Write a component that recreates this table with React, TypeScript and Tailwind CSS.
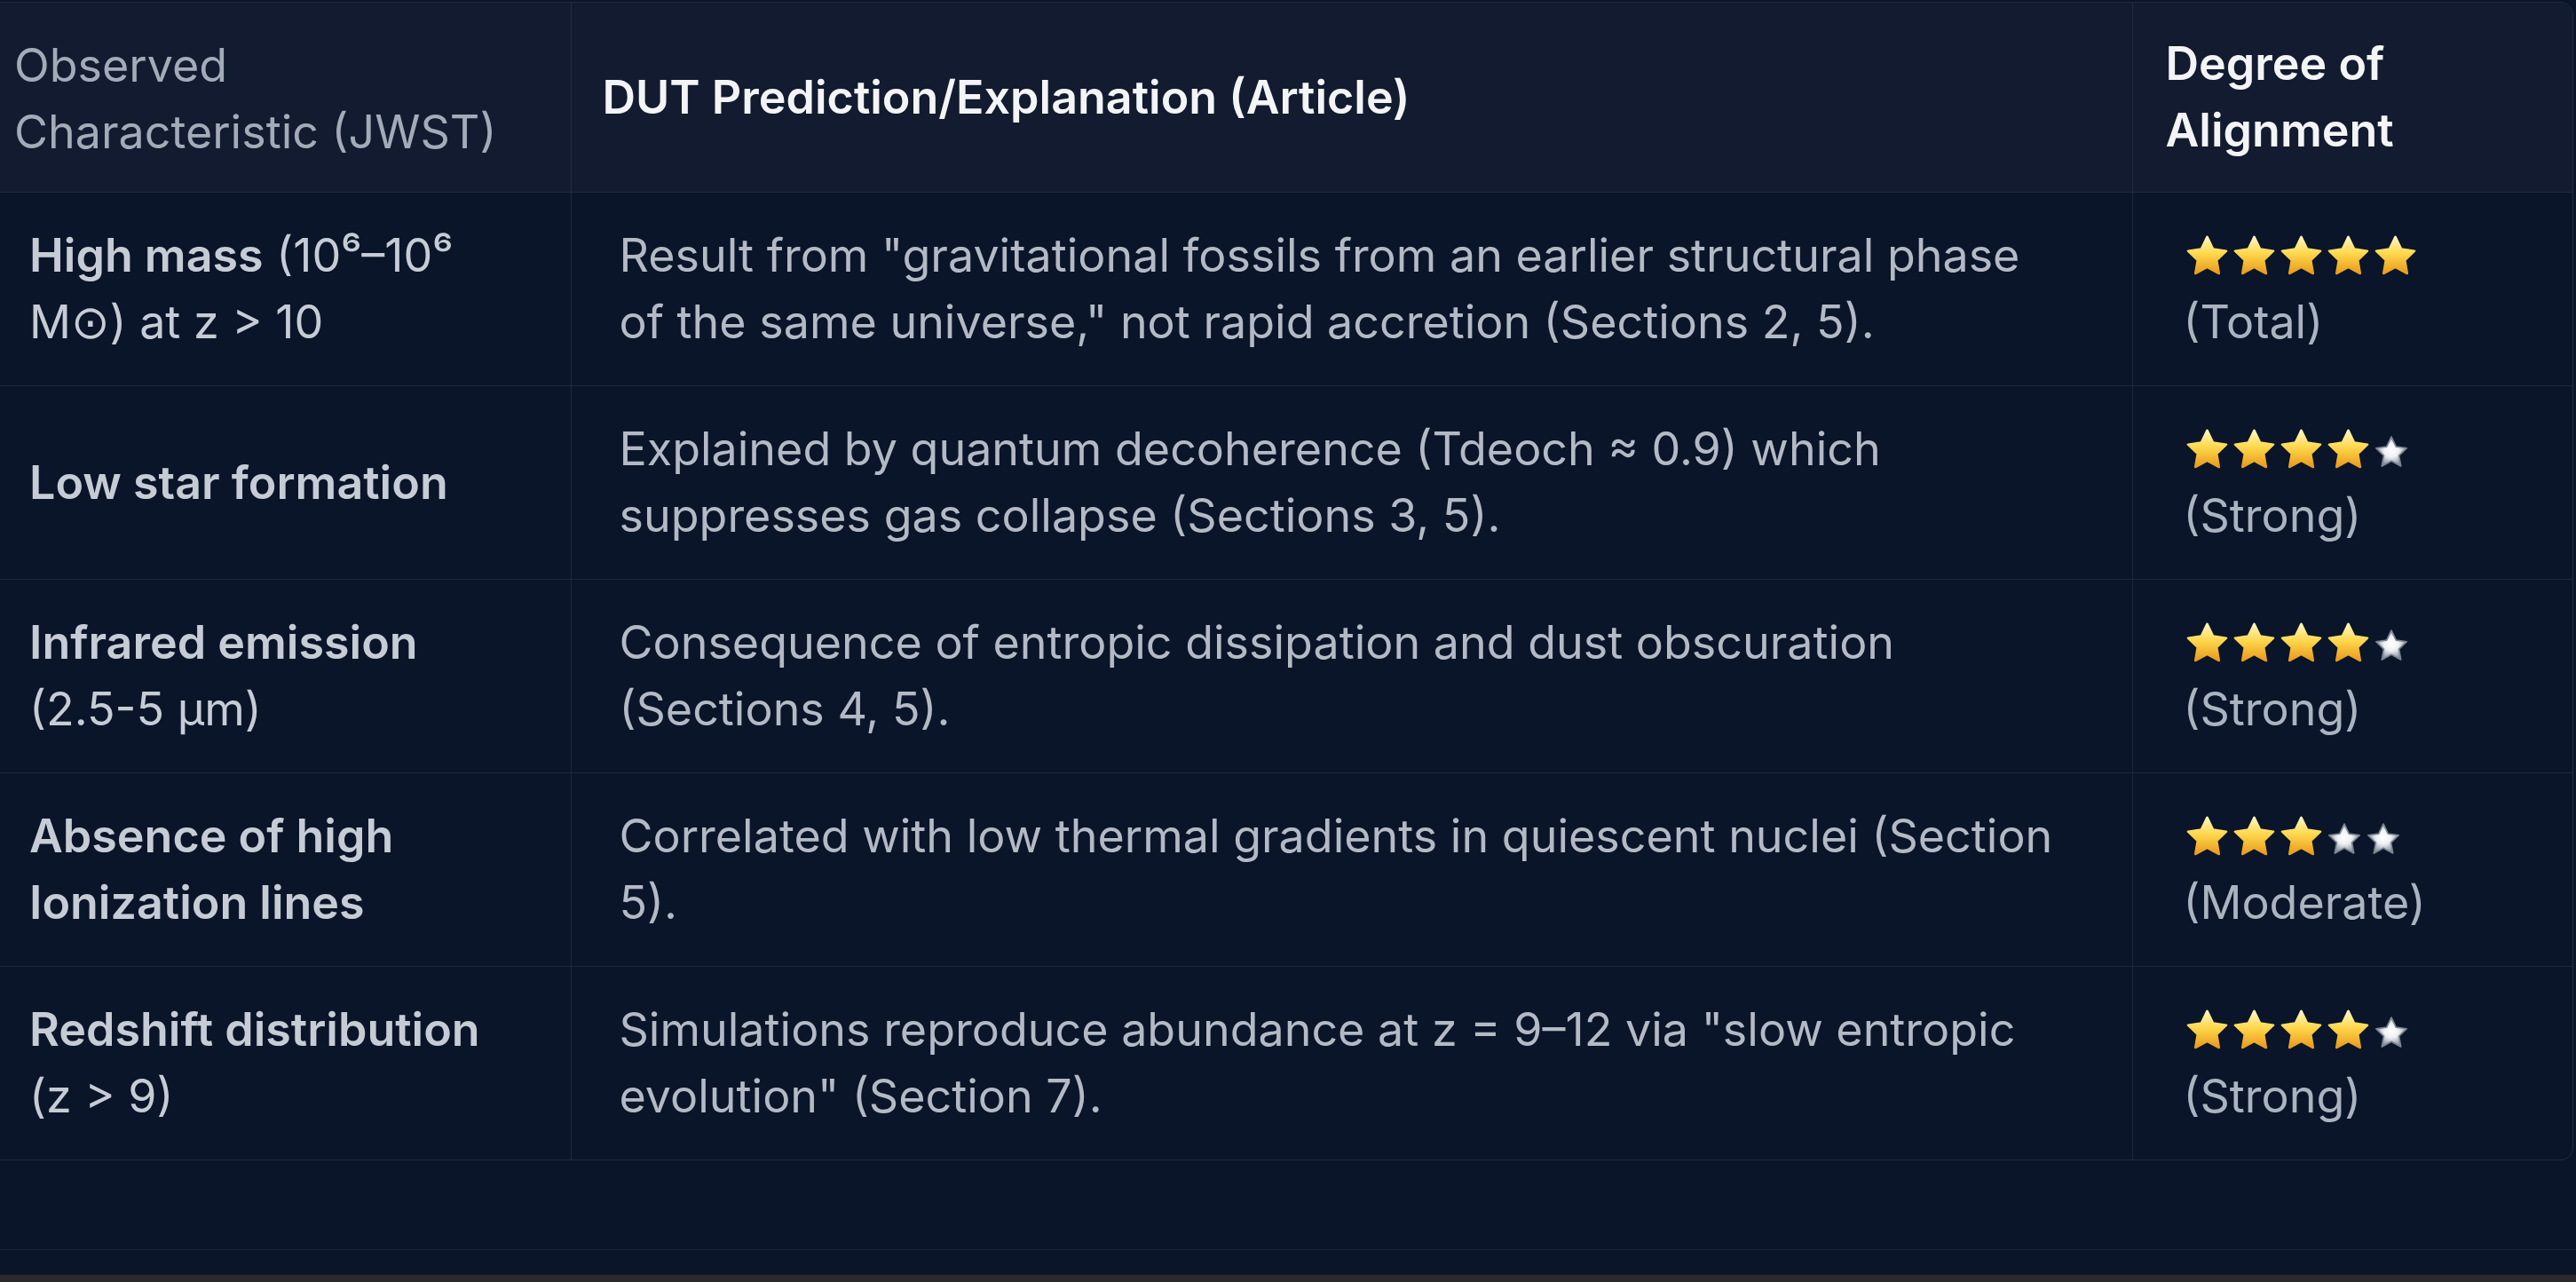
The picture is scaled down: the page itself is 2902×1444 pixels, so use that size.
import React from 'react';

type Row = {
  head: React.ReactNode;
  text: string;
  gold: number;
  label: string;
};

const rows: Row[] = [
  {
    head: (
      <>
        <span className="font-semibold">High mass</span> (10⁶–10⁶ M⊙) at z &gt; 10
      </>
    ),
    text: 'Result from "gravitational fossils from an earlier structural phase of the same universe," not rapid accretion (Sections 2, 5).',
    gold: 5,
    label: '(Total)',
  },
  {
    head: <span className="font-semibold">Low star formation</span>,
    text: 'Explained by quantum decoherence (Tdeoch ≈ 0.9) which suppresses gas collapse (Sections 3, 5).',
    gold: 4,
    label: '(Strong)',
  },
  {
    head: (
      <>
        <span className="font-semibold">Infrared emission</span> (2.5-5 μm)
      </>
    ),
    text: 'Consequence of entropic dissipation and dust obscuration (Sections 4, 5).',
    gold: 4,
    label: '(Strong)',
  },
  {
    head: <span className="font-semibold">Absence of high Ionization lines</span>,
    text: 'Correlated with low thermal gradients in quiescent nuclei (Section 5).',
    gold: 3,
    label: '(Moderate)',
  },
  {
    head: (
      <>
        <span className="font-semibold">Redshift distribution</span> (z &gt; 9)
      </>
    ),
    text: 'Simulations reproduce abundance at z = 9–12 via "slow entropic evolution" (Section 7).',
    gold: 4,
    label: '(Strong)',
  },
];

const STAR = 'M12 1.8l3.05 6.3 6.85.95-4.98 4.8 1.2 6.85L12 17.45 5.88 20.7l1.2-6.85L2.1 9.05l6.85-.95z';

function GoldStar() {
  return (
    <svg viewBox="0 0 24 23" className="w-[53px] h-[50px] shrink-0">
      <path d={STAR} fill="url(#goldGrad)" stroke="url(#goldGrad)" strokeWidth="1.2" strokeLinejoin="round" />
    </svg>
  );
}

function SilverStar() {
  return (
    <svg viewBox="0 0 24 23" className="w-[44px] h-[40px] shrink-0 mb-[2px]">
      <path d={STAR} fill="url(#silverGrad)" stroke="#7c8591" strokeWidth="1" strokeLinejoin="round" />
    </svg>
  );
}

function Rating({ gold, label }: { gold: number; label: string }) {
  return (
    <div className="flex flex-col">
      <div className="flex items-end h-[75px] pb-[12px]">
        {Array.from({ length: 5 }).map((_, i) => (i < gold ? <GoldStar key={i} /> : <SilverStar key={i} />))}
      </div>
      <div className="text-[#aab3bf]">{label}</div>
    </div>
  );
}

export default function App() {
  return (
    <div
      className="min-h-screen w-full bg-[#0b1529] overflow-hidden flex flex-col text-[52px] leading-[75px]"
      style={{ fontFamily: 'Inter, "DejaVu Sans", sans-serif' }}
    >
      <svg width="0" height="0" className="block">
        <defs>
          <linearGradient id="goldGrad" x1="0" y1="0" x2="0" y2="1">
            <stop offset="0%" stopColor="#fff6c2" />
            <stop offset="45%" stopColor="#ffd84d" />
            <stop offset="100%" stopColor="#e89a1c" />
          </linearGradient>
          <radialGradient id="silverGrad" cx="0.5" cy="0.45" r="0.6">
            <stop offset="0%" stopColor="#ffffff" />
            <stop offset="40%" stopColor="#eef1f4" />
            <stop offset="100%" stopColor="#6f7884" />
          </radialGradient>
        </defs>
      </svg>

      <div className="w-[2919px] -ml-[20px] mt-[2px] border border-[#222c40] rounded-r-[14px] overflow-hidden">
        <table className="w-full table-fixed border-collapse">
          <colgroup>
            <col className="w-[662px]" />
            <col className="w-[1759px]" />
            <col />
          </colgroup>
          <thead className="bg-[#121b2f]">
            <tr className="h-[213px] border-b border-[#222c40]">
              <th className="text-left font-normal text-[#a3abb8] pl-[35px] pr-[60px] pt-[4px] align-middle border-r border-[#222c40]">
                Observed Characteristic (JWST)
              </th>
              <th className="text-left font-semibold text-[#f3f4f6] px-[35px] align-middle border-r border-[#222c40]">
                DUT Prediction/Explanation (Article)
              </th>
              <th className="text-left font-semibold text-[#f3f4f6] px-[37px] align-middle">
                Degree of Alignment
              </th>
            </tr>
          </thead>
          <tbody>
            {rows.map((r, i) => (
              <tr key={i} className={'h-[218px] ' + (i < rows.length - 1 ? 'border-b border-[#1e283b]' : '')}>
                <td className="pl-[52px] pr-[40px] align-middle text-[#c6ccd5] border-r border-[#1e283b]">
                  {r.head}
                </td>
                <td className="pl-[54px] pr-[70px] align-middle text-[#b3bac5] border-r border-[#1e283b]">{r.text}</td>
                <td className="pl-[57px] pr-[20px] align-middle">
                  <Rating gold={r.gold} label={r.label} />
                </td>
              </tr>
            ))}
          </tbody>
        </table>
      </div>

      <div className="flex-1 mt-[100px] border-t border-[#1c2639]" />
      <div className="h-[8px] bg-[#2a2a2a]" />
    </div>
  );
}
